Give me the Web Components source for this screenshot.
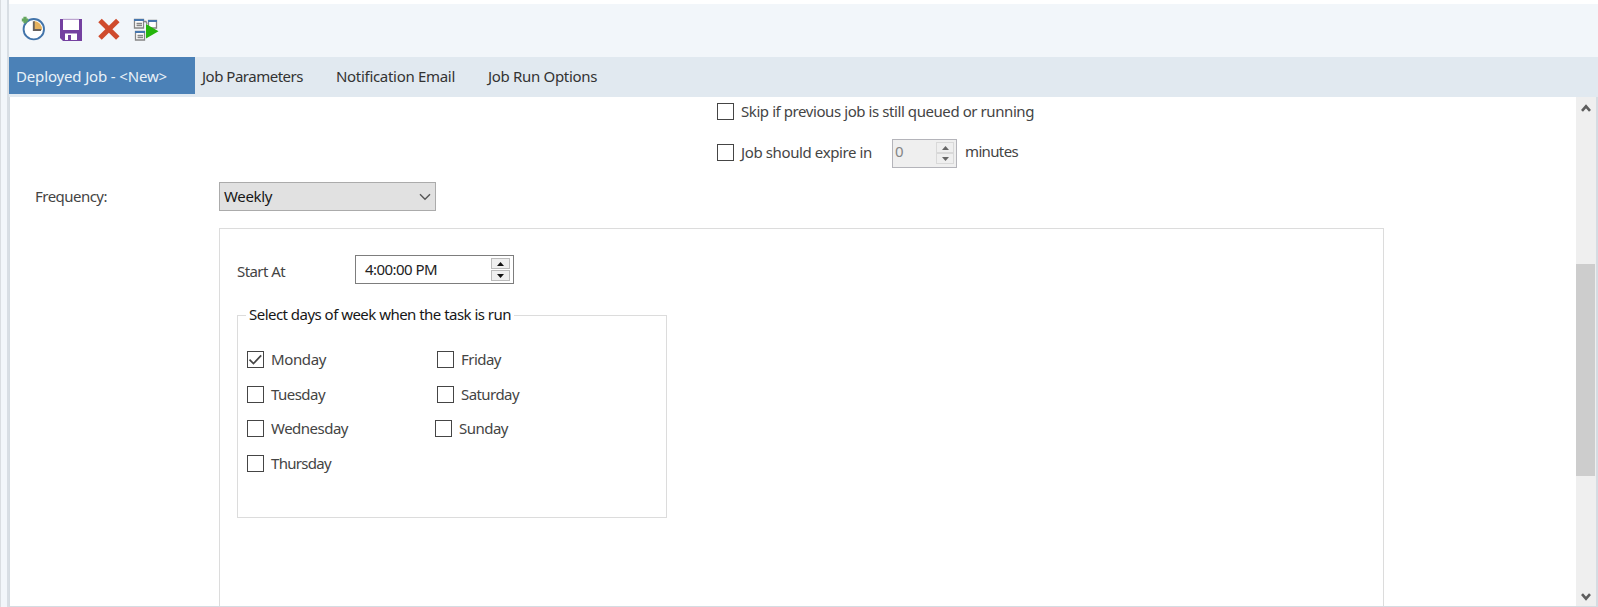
<!DOCTYPE html>
<html lang="en"><head><meta charset="utf-8"><title>Deployed Job</title>
<style>html,body{margin:0;height:100%;overflow:hidden;background:#fff;font:15px/20px "Noto Sans","Open Sans",sans-serif;font-stretch:90%;color:#444}</style></head>
<body><job-window></job-window>
<script>
const define=(name,html,init)=>customElements.define(name,class extends HTMLElement{
  connectedCallback(){
    if(this.shadowRoot)return;
    const t=document.createElement('template');t.innerHTML=html;
    this.attachShadow({mode:'open'}).append(t.content.cloneNode(true));
    if(init)init.call(this,this.shadowRoot);
  }
});

/* A one-line label whose tracking adapts to the width in its "w" attribute. */
define('fit-text',`<style>:host{display:block;white-space:pre;height:20px;line-height:20px;flex:none}span{display:inline-block}</style><span><slot></slot></span>`,function(r){
  const w=+this.getAttribute('w'),s=r.querySelector('span');
  this.style.width=w+'px';
  const natural=s.getBoundingClientRect().width;
  s.style.letterSpacing=((w-natural)/this.textContent.length)+'px';
});

define('check-box',`<style>:host{display:flex;align-items:flex-start;height:20px;gap:7px}
.box{box-sizing:border-box;width:17px;height:17px;border:1.5px solid #454545;background:#fff;flex:none}
svg{display:none;width:15px;height:15px}:host([checked]) svg{display:block}.t{margin-top:-2px}</style>
<div class="box"><svg viewBox="0 0 15 15"><path d="M1.5 7.6 5.5 11.5 13.2 3.4" fill="none" stroke="#444" stroke-width="1.7"/></svg></div><div class="t"><slot></slot></div>`);

define('spin-buttons',`<style>:host{display:flex;flex-direction:column;gap:var(--gap,1px)}i{box-sizing:border-box;display:flex;align-items:center;justify-content:center;width:var(--bw,19px);height:11px;border:1px solid var(--line,#bbb);background:#efefef}
svg{width:7px;height:4px;fill:var(--arrow,#111)}</style><i><svg viewBox="0 0 7 4"><path d="M0 4 3.5 0 7 4Z"/></svg></i><i><svg viewBox="0 0 7 4"><path d="M0 0H7L3.5 4Z"/></svg></i>`);

define('number-field',`<style>:host{box-sizing:border-box;display:flex;justify-content:space-between;width:65px;height:29px;border:1.5px solid #b4b4ba;background:#efefef;color:#858585;padding:2px 2px 0 2px;--line:#d9d9d9;--arrow:#666;--bw:18px;--gap:0px}</style><div style="margin-top:-1px"><slot></slot></div><spin-buttons></spin-buttons>`);

define('time-field',`<style>:host{box-sizing:border-box;display:flex;justify-content:space-between;width:159px;height:29px;border:1px solid #7d7d7d;background:#fff;color:#222;padding:2px 3px 0 9px}</style><div style="padding-top:1px"><slot></slot></div><spin-buttons></spin-buttons>`);

define('select-box',`<style>:host{box-sizing:border-box;display:flex;align-items:center;justify-content:space-between;width:217px;height:29px;border:1px solid #ababab;background:#e1e1e1;color:#171717;padding:0 4px 0 4px}svg{width:12px;height:8px}.v{margin-top:-2px}</style><div class="v"><slot></slot></div><svg viewBox="0 0 12 8"><path d="m1 1.3 5 4.9 5-4.9" fill="none" stroke="#555" stroke-width="1.4"/></svg>`);

define('tool-bar',`<style>:host{display:flex;height:53px;background:#f2f6fa;box-sizing:border-box;padding:12px 0 0 12px;gap:12px}svg{width:26px;height:26px;flex:none}svg:last-child{margin-left:-2px}</style>
<svg viewBox="0 0 26 26"><circle cx="12.8" cy="13.2" r="10.2" fill="#fff" stroke="#4274aa" stroke-width="1.9"/><path d="M13 5V14H21A8.3 8.3 0 0 0 13 5Z" fill="#e6b25e"/><path d="M12.8 5.2V14H20" fill="none" stroke="#67615d" stroke-width="1.9"/><path d="M4 .8V7.2M.8 4H7.2" stroke="#65a65f" stroke-width="3.2"/></svg>
<svg viewBox="0 0 26 26"><path d="M1 3H23V25H4L1 22Z" fill="#7440a0"/><path d="M4 3.5H20V14H4ZM6 17.5H18V24H6Z" fill="#fff"/><path d="M9 19H12V24H9Z" fill="#7440a0"/><path d="M4 3.3H20" stroke="#bda5cf"/></svg>
<svg viewBox="0 0 26 26"><path d="M3 4.5 20.8 22M20.8 4.5 3 22" fill="none" stroke="#cf4b2d" stroke-width="5"/></svg>
<svg viewBox="0 0 26 26"><g fill="#fff" stroke="#858585" stroke-width="1.3"><path d="M1.5 3.5H10.5V12H1.5ZM2.5 15.5H11.5V24H2.5ZM15.5 4.5H23.5V12H15.5Z"/><path d="M3.5 7.5H9M3.5 9.5H9M4.5 19.5H10M4.5 21.5H10M10.5 5.5H13L14 8" fill="none"/></g><path d="M1 4H11M2 16H12M15 5H24" stroke="#4776ad" stroke-width="2"/><path d="M13 8 25.5 15.2 13 22.4Z" fill="#25b50b"/></svg>`);

define('tab-bar',`<style>:host{display:flex;height:40px;background:#e1e9f0;color:#333}
.on{box-sizing:border-box;background:#4b81b7;color:#e9f1f8;width:186px;height:37px;padding-left:7px;margin-right:7px}
div,fit-text{flex:none}fit-text{margin-top:9px}.on{display:flex}.gap{width:33px}</style>
<div class="on"><fit-text w="151">Deployed Job - &lt;New&gt;</fit-text></div>
<fit-text w="101">Job Parameters</fit-text><div class="gap"></div><fit-text w="119">Notification Email</fit-text><div class="gap"></div><fit-text w="109">Job Run Options</fit-text>`);

define('scroll-bar',`<style>:host{box-sizing:border-box;display:flex;flex-direction:column;align-items:center;width:20px;height:509px;background:#efefef;padding:7px 1px 5px 0;flex:none}
svg{width:10px;height:8px;flex:none}.thumb{width:19px;height:212px;background:#cdcdcd;margin-top:152px;flex:none}.rest{flex:1}</style>
<svg viewBox="0 0 10 8"><path d="M1 6.8 5 2.3 9 6.8" fill="none" stroke="#5e5e5e" stroke-width="2.6"/></svg><div class="thumb"></div><div class="rest"></div><svg viewBox="0 0 10 8"><path d="M1 1.2 5 5.7 9 1.2" fill="none" stroke="#5e5e5e" stroke-width="2.6"/></svg>`);

define('group-box',`<style>:host{display:block}fieldset{box-sizing:border-box;width:430px;height:213px;margin:0;padding:0;border:1px solid #dcdcdc;min-width:0}legend{padding:0 3px;margin-left:8px;color:#171717;height:20px}.lift{margin-top:-1px}</style><fieldset><legend><div class="lift"><slot name="title"></slot></div></legend><slot></slot></fieldset>`);

define('week-days',`<style>:host{display:grid;grid-template-columns:190px 190px;grid-template-rows:35px 34px 35px 20px;padding:26px 0 0 9px}.sun{margin-left:-2px}</style>
<check-box checked><fit-text w="55">Monday</fit-text></check-box><check-box><fit-text w="40">Friday</fit-text></check-box>
<check-box><fit-text w="54">Tuesday</fit-text></check-box><check-box><fit-text w="58">Saturday</fit-text></check-box>
<check-box><fit-text w="77">Wednesday</fit-text></check-box><check-box class="sun"><fit-text w="49">Sunday</fit-text></check-box>
<check-box><fit-text w="60">Thursday</fit-text></check-box>`);

define('schedule-panel',`<style>:host{box-sizing:border-box;display:block;width:1165px;height:378px;border:1px solid #dcdcdc;border-bottom:0;padding:26px 0 0 17px}.start{display:flex;height:29px;margin-bottom:21px}.start>fit-text{margin:6px 70px 0 0}</style>
<div class="start"><fit-text w="48">Start At</fit-text><time-field><fit-text w="72">4:00:00 PM</fit-text></time-field></div>
<group-box><fit-text slot="title" w="262">Select days of week when the task is run</fit-text><week-days></week-days></group-box>`);

define('job-form',`<style>:host{box-sizing:border-box;display:grid;grid-template-columns:184px 1fr;grid-template-rows:85px 46px 378px;flex:1;min-width:0;padding-left:25px}.opts{grid-column:2;padding:6px 0 0 498px}.row{display:flex;margin-top:21px;height:29px}.row check-box{width:175px}.row number-field{margin-top:-5px}.mins{margin:-3px 0 0 8px}.freq{margin-top:4px}</style>
<div class="opts"><check-box><fit-text w="293">Skip if previous job is still queued or running</fit-text></check-box>
<div class="row"><check-box><fit-text w="131">Job should expire in</fit-text></check-box><number-field><fit-text w="9">0</fit-text></number-field><fit-text class="mins" w="53">minutes</fit-text></div></div>
<fit-text class="freq" w="72">Frequency:</fit-text><select-box><fit-text w="48">Weekly</fit-text></select-box><div></div><schedule-panel></schedule-panel>`);

define('job-window',`<style>:host{display:flex;height:607px;box-sizing:border-box}.rail{box-sizing:border-box;width:9px;background:#f2f6fa;border-left:1px solid #d9dde1;border-right:2px solid #d8dee4;flex:none}
main{flex:1;min-width:0;padding-top:4px}.view{box-sizing:border-box;display:flex;height:510px;border:solid #d5dce2;border-width:0 2px 1px 1px}</style>
<div class="rail"></div><main><tool-bar></tool-bar><tab-bar></tab-bar><div class="view"><job-form></job-form><scroll-bar></scroll-bar></div></main>`);
</script></body></html>
